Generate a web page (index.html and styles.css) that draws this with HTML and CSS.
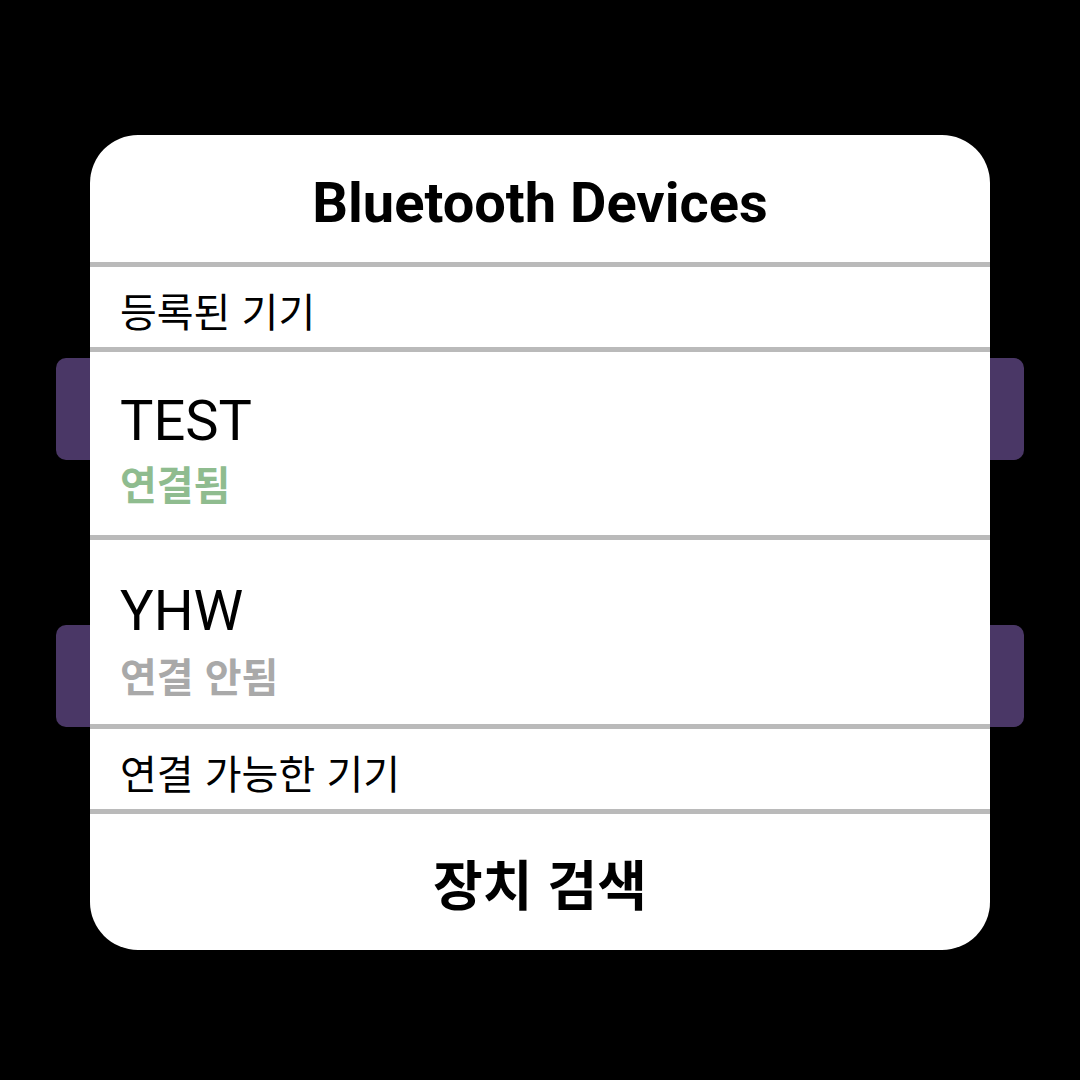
FILE: index.html
```html
<!DOCTYPE html>
<html lang="ko">
<head>
<meta charset="utf-8">
<title>Bluetooth Devices</title>
<link rel="stylesheet" href="styles.css">
</head>
<body>
<div class="screen">
  <div class="backdrop-list">
    <div class="bg-item"></div>
    <div class="bg-item"></div>
  </div>
  <div class="dialog">
    <div class="dialog-title">Bluetooth Devices</div>
    <div class="divider"></div>
    <div class="section-header">등록된 기기</div>
    <div class="divider"></div>
    <div class="device">
      <div class="device-name">TEST</div>
      <div class="device-status connected">연결됨</div>
    </div>
    <div class="divider"></div>
    <div class="device">
      <div class="device-name">YHW</div>
      <div class="device-status disconnected">연결 안됨</div>
    </div>
    <div class="divider"></div>
    <div class="section-header">연결 가능한 기기</div>
    <div class="divider"></div>
    <div class="dialog-button">장치 검색</div>
  </div>
</div>
</body>
</html>
```

FILE: styles.css
```css
html, body {
  margin: 0;
  padding: 0;
  background: #000;
}

.screen {
  position: relative;
  width: 1080px;
  height: 1080px;
  background: #000;
  overflow: hidden;
  font-family: Roboto, "Noto Sans CJK KR", sans-serif;
}

.backdrop-list {
  display: flex;
  flex-direction: column;
  gap: 165px;
  padding: 358px 56px 0 56px;
}

.bg-item {
  height: 102px;
  border-radius: 10px;
  background: #4a3766;
}

.dialog {
  position: absolute;
  left: 90px;
  top: 135px;
  width: 900px;
  height: 815px;
  background: #fff;
  border-radius: 48px;
  display: flex;
  flex-direction: column;
  overflow: hidden;
  color: #000;
}

.dialog-title {
  height: 127px;
  box-sizing: border-box;
  padding-top: 8px;
  display: flex;
  align-items: center;
  justify-content: center;
  font-size: 56px;
  font-weight: 700;
}

.divider {
  height: 5px;
  background: #bababa;
  flex: none;
}

.section-header {
  height: 80px;
  box-sizing: border-box;
  padding: 19px 0 0 30px;
  font-family: "Noto Sans CJK KR", sans-serif;
  font-size: 40px;
  line-height: 48px;
}

.device {
  height: 183px;
  box-sizing: border-box;
  padding: 37px 0 0 30px;
  display: flex;
  flex-direction: column;
  gap: 6px;
}

.device + .divider + .device {
  height: 184px;
  padding-top: 39px;
  gap: 8px;
}

.device-name {
  font-size: 56px;
  line-height: 64px;
}

.device-status {
  font-family: "Noto Sans CJK KR", sans-serif;
  font-size: 40px;
  line-height: 48px;
  font-weight: 700;
}

.connected {
  color: #8fbc8f;
}

.disconnected {
  color: #a9a9a9;
}

.dialog-button {
  flex: 1;
  display: flex;
  align-items: center;
  justify-content: center;
  font-family: "Noto Sans CJK KR", sans-serif;
  font-size: 54px;
  font-weight: 700;
}
```
